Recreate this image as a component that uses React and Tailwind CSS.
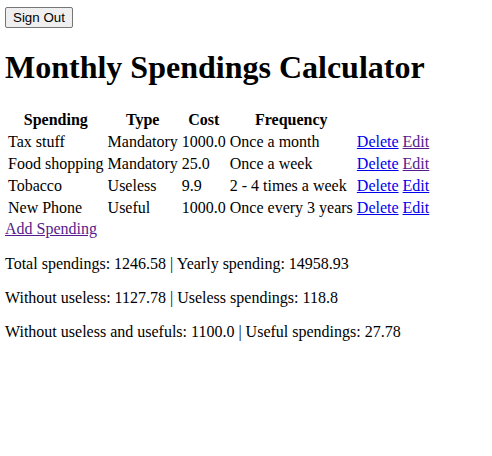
import React from "react";

const rows = [
  { name: "Tax stuff", type: "Mandatory", cost: "1000.0", freq: "Once a month", visited: true },
  { name: "Food shopping", type: "Mandatory", cost: "25.0", freq: "Once a week", visited: true },
  { name: "Tobacco", type: "Useless", cost: "9.9", freq: "2 - 4 times a week", visited: false },
  { name: "New Phone", type: "Useful", cost: "1000.0", freq: "Once every 3 years", visited: false },
];

export default function App() {
  return (
    <div className="min-h-[456px] bg-white text-black font-['Liberation_Serif',serif] text-base leading-[normal] pl-[5px] pt-[7px]">
      <button className="block font-['Liberation_Sans',sans-serif] text-[13.33px] leading-[15px] px-[7px] py-[2px] border border-[#767676] rounded-[2px] bg-[#efefef]">
        Sign Out
      </button>
      <h1 className="text-[32px] font-bold leading-[normal] mt-[21px] mb-[22px]">
        Monthly Spendings Calculator
      </h1>
      <table className="border-separate border-spacing-[2px]">
        <thead>
          <tr>
            <th className="p-px font-bold">Spending</th>
            <th className="p-px font-bold">Type</th>
            <th className="p-px font-bold">Cost</th>
            <th className="p-px font-bold">Frequency</th>
          </tr>
        </thead>
        <tbody>
          {rows.map((r) => (
            <tr key={r.name}>
              <td className="p-px">{r.name}</td>
              <td className="p-px">{r.type}</td>
              <td className="p-px">{r.cost}</td>
              <td className="p-px">{r.freq}</td>
              <td className="p-px">
                <a href="#" className="text-[#0000ee] underline">Delete</a>{" "}
                <a href="#" className={r.visited ? "text-[#551a8b] underline" : "text-[#0000ee] underline"}>Edit</a>
              </td>
            </tr>
          ))}
        </tbody>
      </table>
      <a href="#" className="text-[#551a8b] underline">Add Spending</a>
      <p className="mt-[17px] mb-4">Total spendings: 1246.58 | Yearly spending: 14958.93</p>
      <p className="my-4">Without useless: 1127.78 | Useless spendings: 118.8</p>
      <p className="my-4">Without useless and usefuls: 1100.0 | Useful spendings: 27.78</p>
    </div>
  );
}
